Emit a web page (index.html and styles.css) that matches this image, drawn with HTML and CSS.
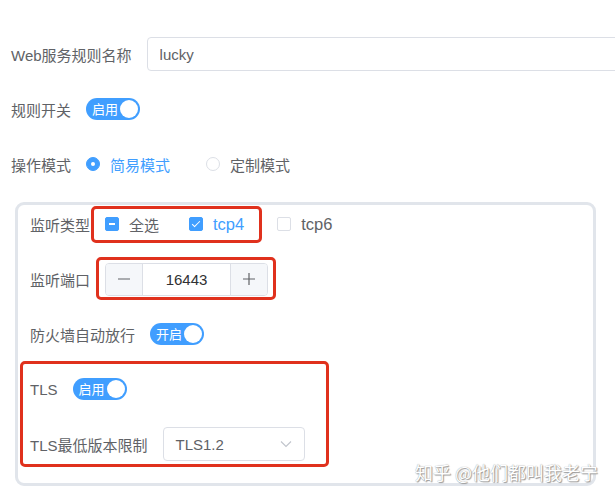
FILE: index.html
```html
<!DOCTYPE html>
<html lang="zh-CN">
<head>
    <meta charset="UTF-8">
    <meta name="viewport" content="width=device-width, initial-scale=1.0">
    <title>Web服务规则</title>
    <link rel="stylesheet" href="styles.css">
</head>
<body>

<div class="page">
    <form class="rule-form">
        <div class="form-item">
            <label class="item-label" for="ruleName">Web服务规则名称</label>
            <input class="text-input" id="ruleName" type="text" value="lucky">
        </div>

        <div class="form-item">
            <span class="item-label">规则开关</span>
            <span class="switch"><span class="switch-text">启用</span><span class="knob"></span></span>
        </div>

        <div class="form-item">
            <span class="item-label">操作模式</span>
            <span class="radio is-checked"><span class="radio-dot"></span><span class="radio-text">简易模式</span></span>
            <span class="radio"><span class="radio-dot"></span><span class="radio-text">定制模式</span></span>
        </div>

        <!-- Simple mode settings -->
        <div class="mode-box">
            <div class="form-item">
                <span class="item-label">监听类型</span>
                <span class="mark mark-check">
                    <span class="check is-indeterminate"><span class="check-box"></span><span class="check-text">全选</span></span>
                    <span class="check is-checked"><span class="check-box"></span><span class="check-text en">tcp4</span></span>
                </span>
                <span class="check"><span class="check-box"></span><span class="check-text en">tcp6</span></span>
            </div>

            <div class="form-item">
                <span class="item-label">监听端口</span>
                <span class="mark mark-port">
                    <span class="number-input">
                        <span class="num-btn">
                            <svg width="14" height="14" viewBox="0 0 14 14"><path d="M1 7h12" stroke="#606266" stroke-width="1.2"/></svg>
                        </span>
                        <span class="num-value">16443</span>
                        <span class="num-btn">
                            <svg width="14" height="14" viewBox="0 0 14 14"><path d="M1 7h12M7 1v12" stroke="#606266" stroke-width="1.2"/></svg>
                        </span>
                    </span>
                </span>
            </div>

            <div class="form-item">
                <span class="item-label">防火墙自动放行</span>
                <span class="switch"><span class="switch-text">开启</span><span class="knob"></span></span>
            </div>

            <div class="mark mark-tls">
                <div class="form-item">
                    <span class="item-label">TLS</span>
                    <span class="switch"><span class="switch-text">启用</span><span class="knob"></span></span>
                </div>

                <div class="form-item">
                    <span class="item-label">TLS最低版本限制</span>
                    <span class="select">
                        <span class="select-value">TLS1.2</span>
                        <svg width="12" height="8" viewBox="0 0 12 8"><path d="M1 1.5l5 5 5-5" fill="none" stroke="#c0c4cc" stroke-width="1.1"/></svg>
                    </span>
                </div>
            </div>
        </div>
    </form>

    <div class="watermark">知乎 @他们都叫我老宁</div>
</div>

</body>
</html>
```

FILE: styles.css
```css
body {
    margin: 0;
    padding: 0;
    background: #fff;
    font-family: "Liberation Sans", "Noto Sans CJK SC", sans-serif;
    font-size: 15px;
    color: #606266;
    overflow: hidden;
}

.page {
    position: relative;
    width: 615px;
    height: 500px;
    overflow: hidden;
}

.rule-form {
    padding: 37px 0 0 11px;
}

.form-item {
    display: flex;
    align-items: center;
    height: 34px;
    margin-bottom: 21px;
}

.item-label {
    margin-right: 15px;
    white-space: nowrap;
    color: #606266;
}

.text-input {
    width: 500px;
    height: 34px;
    box-sizing: border-box;
    padding: 0 12px;
    border: 1px solid #dcdfe6;
    border-radius: 4px;
    font-family: inherit;
    font-size: 15px;
    color: #606266;
    outline: none;
    flex-shrink: 0;
}

/* Switch */
.switch {
    display: inline-flex;
    align-items: center;
    justify-content: space-between;
    box-sizing: border-box;
    width: 54px;
    height: 22px;
    padding: 0 2px 0 6px;
    border-radius: 11px;
    background-color: #409eff;
}

.switch-text {
    font-size: 13px;
    color: #fff;
    line-height: 1;
}

.knob {
    width: 18px;
    height: 18px;
    border-radius: 50%;
    background-color: #fff;
}

/* Radio */
.radio {
    display: inline-flex;
    align-items: center;
    margin-right: 36px;
}

.radio-dot {
    width: 14px;
    height: 14px;
    box-sizing: border-box;
    border: 1px solid #dcdfe6;
    border-radius: 50%;
    margin-right: 10px;
    position: relative;
}

.radio.is-checked .radio-dot {
    background-color: #409eff;
    border-color: #409eff;
}

.radio.is-checked .radio-dot::after {
    content: "";
    position: absolute;
    left: 4px;
    top: 4px;
    width: 4px;
    height: 4px;
    border-radius: 50%;
    background-color: #fff;
}

.radio.is-checked .radio-text {
    color: #409eff;
}

/* Mode box */
.mode-box {
    margin-left: 4px;
    width: 581px;
    box-sizing: border-box;
    border: 3px solid #e1e5eb;
    border-radius: 9px;
    padding: 2px 12px 1px;
}

/* Checkbox */
.check {
    display: inline-flex;
    align-items: center;
    margin-right: 30px;
}

.check-box {
    position: relative;
    width: 14px;
    height: 14px;
    box-sizing: border-box;
    border: 1px solid #dcdfe6;
    border-radius: 2px;
    margin-right: 10px;
    background-color: #fff;
}

.check-text.en {
    font-size: 16.5px;
}

.check.is-indeterminate .check-box,
.check.is-checked .check-box {
    background-color: #409eff;
    border-color: #409eff;
}

.check.is-indeterminate .check-box::after {
    content: "";
    position: absolute;
    left: 3px;
    top: 5px;
    width: 6px;
    height: 2px;
    background-color: #fff;
}

.check.is-checked .check-box::after {
    content: "";
    position: absolute;
    left: 4px;
    top: 1px;
    width: 3px;
    height: 7px;
    border: 1px solid #fff;
    border-left: 0;
    border-top: 0;
    transform: rotate(45deg);
}

.check.is-checked .check-text {
    color: #409eff;
}

.mark-check .check:last-child {
    margin-right: 0;
}

/* Number input */
.number-input {
    display: inline-flex;
    width: 163px;
    height: 33px;
    box-sizing: border-box;
    border: 1px solid #dcdfe6;
    border-radius: 4px;
    overflow: hidden;
}

.num-btn {
    display: flex;
    align-items: center;
    justify-content: center;
    width: 36px;
    background-color: #f5f7fa;
}

.num-btn:first-child {
    border-right: 1px solid #dcdfe6;
}

.num-btn:last-child {
    border-left: 1px solid #dcdfe6;
}

.num-value {
    flex: 1;
    display: flex;
    align-items: center;
    justify-content: center;
    color: #303133;
}

/* Select */
.select {
    display: inline-flex;
    align-items: center;
    justify-content: space-between;
    width: 142px;
    height: 34px;
    box-sizing: border-box;
    padding: 0 12px;
    border: 1px solid #dcdfe6;
    border-radius: 4px;
}

.select-value {
    color: #606266;
}

/* Red annotation frames */
.mark {
    position: relative;
    display: inline-flex;
    align-items: center;
}

.mark::after {
    content: "";
    position: absolute;
    border: 3px solid #e0311d;
    border-radius: 5px;
    pointer-events: none;
}

.mark-check {
    height: 20px;
    margin-right: 33px;
}

.mark-check::after {
    left: -14px;
    right: -18px;
    top: -8px;
    bottom: -9px;
}

.mark-port::after {
    left: -9px;
    right: -8px;
    top: -6px;
    bottom: -4px;
}

.mark-tls {
    display: block;
}

.mark-tls::after {
    left: -10px;
    width: 303px;
    top: -11px;
    bottom: -6px;
}

.watermark {
    position: absolute;
    right: 17px;
    top: 459px;
    font-family: "Noto Sans CJK SC", sans-serif;
    font-size: 18px;
    color: #fff;
    text-shadow: 0 0 1px #8a8a8a, 1px 1px 1px #9a9a9a;
}
```
